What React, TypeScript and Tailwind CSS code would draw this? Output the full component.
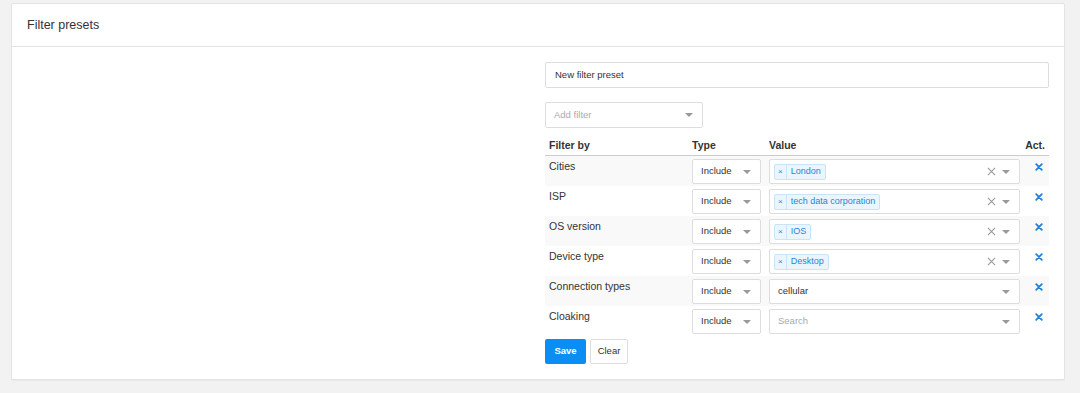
import React from "react";

const Caret = () => (
  <span className="inline-block w-0 h-0 border-l-[4px] border-r-[4px] border-t-[4px] border-l-transparent border-r-transparent border-t-[#999]" />
);

const Clear = () => (
  <svg width="9" height="9" viewBox="0 0 10 10" className="text-[#999]">
    <path d="M1 1L9 9M9 1L1 9" stroke="currentColor" strokeWidth="1.2" />
  </svg>
);

const ActX = () => (
  <svg width="8" height="8" viewBox="0 0 10 10">
    <path d="M1.5 1.5L8.5 8.5M8.5 1.5L1.5 8.5" stroke="#1f7fd9" strokeWidth="2.2" strokeLinecap="round" />
  </svg>
);

type Row = { label: string; tag?: string; value?: string; placeholder?: string };

const rows: Row[] = [
  { label: "Cities", tag: "London" },
  { label: "ISP", tag: "tech data corporation" },
  { label: "OS version", tag: "IOS" },
  { label: "Device type", tag: "Desktop" },
  { label: "Connection types", value: "cellular" },
  { label: "Cloaking", placeholder: "Search" },
];

export default function App() {
  return (
    <div
      className="w-[1080px] h-[393px] bg-[#f2f2f3] pt-[3px] pl-[11px] pr-[15px] text-[#333]"
      style={{ fontFamily: '"Liberation Sans", Arial, sans-serif' }}
    >
      <div className="bg-white border border-[#e3e3e3] rounded-[2px] shadow-[0_1px_1px_rgba(0,0,0,0.04)]">
        <div className="h-[43px] border-b border-[#e3e3e3] flex items-center pl-[15px] text-[12.5px] text-[#333]">
          Filter presets
        </div>
        <div className="flex pt-[15px] pb-[15px]">
          <div className="w-[533px]" />
          <div className="w-[504px] flex flex-col">
            <div className="h-[26px] border border-[#ddd] rounded-[2px] flex items-center px-[9px] text-[9.5px] text-[#333]">
              New filter preset
            </div>
            <div className="mt-[14px] w-[158px] h-[26px] border border-[#ddd] rounded-[2px] flex items-center justify-between pl-[8px] pr-[9px] text-[9.5px] text-[#aaa]">
              <span>Add filter</span>
              <Caret />
            </div>
            <div className="mt-[9px]">
              <div className="flex h-[19px] border-b-[1.5px] border-[#ccc] text-[10.5px] font-semibold text-[#333] items-start pt-[1px]">
                <div className="w-[143px] pl-[4px]">Filter by</div>
                <div className="w-[77px] pl-[4px]">Type</div>
                <div className="w-[259px] pl-[4px]">Value</div>
                <div className="flex-1 text-right pr-[4px]">Act.</div>
              </div>
              {rows.map((r, i) => (
                <div
                  key={r.label}
                  className={`flex h-[30px] ${i % 2 === 0 ? "bg-[#f9f9f9]" : "bg-white"}`}
                >
                  <div className="w-[143px] pl-[4px] pt-[3px] text-[10.5px] text-[#333]">{r.label}</div>
                  <div className="w-[77px] pl-[4px] pt-[3px]">
                    <div className="w-[69px] h-[25px] bg-white border border-[#ddd] rounded-[2px] flex items-center justify-between pl-[8px] pr-[9px] text-[9.5px] text-[#333]">
                      <span>Include</span>
                      <Caret />
                    </div>
                  </div>
                  <div className="w-[259px] pl-[4px] pt-[3px]">
                    <div className="w-[251px] h-[25px] bg-white border border-[#ddd] rounded-[2px] flex items-center justify-between pl-[4px] pr-[9px] text-[9.5px]">
                      {r.tag ? (
                        <span className="flex items-center h-[16px] border border-[#c9e3f8] bg-[#ebf5fd] rounded-[2px] text-[#1f86d8] text-[9px]">
                          <span className="px-[3px] border-r border-[#c9e3f8] h-full flex items-center text-[8px]">×</span>
                          <span className="px-[4px]">{r.tag}</span>
                        </span>
                      ) : r.value ? (
                        <span className="pl-[4px] text-[#333]">{r.value}</span>
                      ) : (
                        <span className="pl-[4px] text-[#aaa]">{r.placeholder}</span>
                      )}
                      <span className="flex items-center gap-[6px]">
                        {r.tag && <Clear />}
                        <Caret />
                      </span>
                    </div>
                  </div>
                  <div className="flex-1 flex justify-end pr-[6px] pt-[7px]">
                    <ActX />
                  </div>
                </div>
              ))}
            </div>
            <div className="mt-[3px] flex gap-[4px]">
              <button className="h-[25px] w-[41px] bg-[#0b8ef3] text-white text-[9.5px] font-semibold rounded-[2px]">
                Save
              </button>
              <button className="h-[25px] w-[38px] bg-white border border-[#ddd] text-[#333] text-[9.5px] rounded-[2px]">
                Clear
              </button>
            </div>
          </div>
        </div>
      </div>
    </div>
  );
}
